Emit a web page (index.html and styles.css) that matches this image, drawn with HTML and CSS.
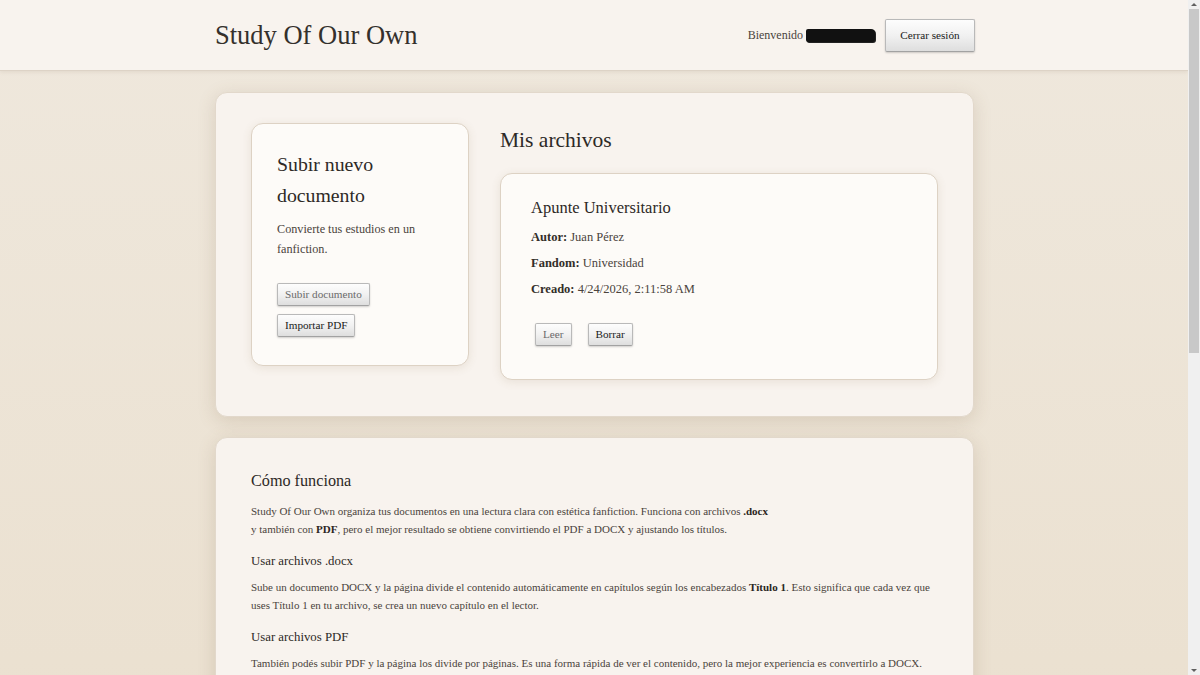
FILE: index.html
```html
<!DOCTYPE html>
<html lang="es">
<head>
<meta charset="utf-8">
<title>Study Of Our Own</title>
<link rel="stylesheet" href="styles.css">
</head>
<body>
<div class="viewport">
<header class="topbar">
  <div class="topbar-inner">
    <h1 class="brand">Study Of Our Own</h1>
    <div class="user">
      <span class="welcome">Bienvenido</span>
      <span class="redacted"></span>
      <button class="btn btn-logout">Cerrar sesión</button>
    </div>
  </div>
</header>
<main class="page">
  <section class="panel panel-files">
    <div class="upload-card">
      <h2 class="upload-title">Subir nuevo documento</h2>
      <p class="upload-text">Convierte tus estudios en un fanfiction.</p>
      <div class="upload-actions">
        <button class="btn btn-sm btn-muted">Subir documento</button>
        <button class="btn btn-sm">Importar PDF</button>
      </div>
    </div>
    <div class="files">
      <h2 class="files-title">Mis archivos</h2>
      <article class="file-card">
        <h3 class="file-title">Apunte Universitario</h3>
        <p class="file-meta"><strong>Autor:</strong> Juan Pérez</p>
        <p class="file-meta"><strong>Fandom:</strong> Universidad</p>
        <p class="file-meta"><strong>Creado:</strong> 4/24/2026, 2:11:58 AM</p>
        <div class="file-actions">
          <button class="btn btn-sm btn-muted">Leer</button>
          <button class="btn btn-sm">Borrar</button>
        </div>
      </article>
    </div>
  </section>
  <section class="panel panel-help">
    <h3 class="help-title">Cómo funciona</h3>
    <p class="help-text">Study Of Our Own organiza tus documentos en una lectura clara con estética fanfiction. Funciona con archivos <strong>.docx</strong><br>y también con <strong>PDF</strong>, pero el mejor resultado se obtiene convirtiendo el PDF a DOCX y ajustando los títulos.</p>
    <h4 class="help-sub">Usar archivos .docx</h4>
    <p class="help-text">Sube un documento DOCX y la página divide el contenido automáticamente en capítulos según los encabezados <strong>Título 1</strong>. Esto significa que cada vez que uses Título 1 en tu archivo, se crea un nuevo capítulo en el lector.</p>
    <h4 class="help-sub">Usar archivos PDF</h4>
    <p class="help-text">También podés subir PDF y la página los divide por páginas. Es una forma rápida de ver el contenido, pero la mejor experiencia es convertirlo a DOCX.<br>Para convertirlo podés usar Word o Google Docs y después aplicar Título 1 a cada capítulo.</p>
    <h4 class="help-sub">Consejos</h4>
    <p class="help-text">Revisá que cada capítulo tenga su propio encabezado y que el documento no tenga saltos de página innecesarios.</p>
  </section>
</main>
</div>
<div class="scrollbar" aria-hidden="true">
  <span class="scroll-arrow scroll-up"></span>
  <span class="scroll-thumb"></span>
  <span class="scroll-arrow scroll-down"></span>
</div>
</body>
</html>
```

FILE: styles.css
```css
* { box-sizing: border-box; }

html, body {
  margin: 0;
  padding: 0;
}

body {
  font-family: "Liberation Serif", "Times New Roman", serif;
  color: #4a433c;
  background: linear-gradient(180deg, #efe8dd 0%, #ebe1d1 60%, #e9dcc8 100%);
  min-height: 1100px;
}

.viewport {
  margin-right: 12px;
}

.topbar {
  height: 71px;
  background: #f8f3ee;
  border-bottom: 1px solid #ddd3c6;
  box-shadow: 0 1px 4px rgba(120, 100, 70, 0.12);
}

.topbar-inner {
  width: 762px;
  height: 70px;
  margin: 0 auto;
  padding-left: 2px;
  display: flex;
  align-items: center;
  justify-content: space-between;
}

.brand {
  margin: 0;
  font-size: 26.5px;
  font-weight: normal;
  color: #34302c;
}

.user {
  display: flex;
  align-items: center;
}

.welcome {
  font-size: 12px;
  color: #4a433c;
}

.redacted {
  display: inline-block;
  width: 69px;
  height: 13px;
  margin-left: 3px;
  margin-right: 10px;
  background: #111;
  border-radius: 2px 4px 3px 2px;
  box-shadow: 1px 1px 0 #222;
}

.btn {
  font-family: "Liberation Serif", "Times New Roman", serif;
  color: #1a1a1a;
  background: linear-gradient(180deg, #fdfdfd 0%, #f1f1f1 50%, #dedede 100%);
  border: 1px solid #b9b9b9;
  border-bottom-color: #a2a2a2;
  border-radius: 2px;
  box-shadow: 0 1px 2px rgba(0, 0, 0, 0.18);
  cursor: pointer;
}

.btn-logout {
  width: 90px;
  height: 33px;
  font-size: 11.2px;
  padding: 0;
}

.btn-sm {
  height: 23px;
  font-size: 11.2px;
  padding: 0 7px;
  line-height: 21px;
}

.btn-muted {
  color: #6a6a6a;
}

.page {
  width: 760px;
  margin: 21px auto 0;
  padding-left: 1px;
  display: flex;
  flex-direction: column;
  gap: 20px;
}

.panel {
  background: #f8f3ee;
  border: 1px solid #e2d8cb;
  border-radius: 12px;
  box-shadow: 0 4px 18px rgba(120, 95, 60, 0.18);
}

.panel-files {
  padding: 30px 35px 36px;
  display: grid;
  grid-template-columns: 218px 438px;
  column-gap: 31px;
  align-items: start;
}

.upload-card {
  background: #fdfbf8;
  border: 1px solid #ddd2c4;
  border-radius: 12px;
  box-shadow: 0 2px 10px rgba(120, 95, 60, 0.12);
  padding: 25px 25px 28px;
}

.upload-title {
  margin: 0;
  font-size: 19.8px;
  line-height: 31px;
  font-weight: normal;
  color: #2d2926;
}

.upload-text {
  margin: 9px 0 0;
  font-size: 12.2px;
  line-height: 19.5px;
}

.upload-actions {
  margin-top: 24px;
  display: flex;
  flex-direction: column;
  align-items: flex-start;
  gap: 8px;
}

.files-title {
  margin: 0;
  font-size: 21.5px;
  line-height: 34px;
  font-weight: normal;
  color: #2d2926;
}

.file-card {
  margin-top: 16px;
  background: #fdfbf8;
  border: 1px solid #ddd2c4;
  border-radius: 12px;
  box-shadow: 0 2px 10px rgba(120, 95, 60, 0.12);
  padding: 21px 30px 33px;
}

.file-title {
  margin: 0;
  font-size: 16.5px;
  line-height: 26px;
  font-weight: normal;
  color: #2d2926;
}

.file-meta {
  margin: 6.5px 0 0;
  font-size: 12.5px;
  line-height: 19.5px;
}

.file-meta strong {
  color: #332e29;
}

.file-actions {
  margin: 24px 0 0 4px;
  display: flex;
  gap: 16px;
}

.panel-help {
  padding: 30px 35px 40px;
}

.help-title {
  margin: 0;
  font-size: 16.2px;
  line-height: 26px;
  font-weight: normal;
  color: #2d2926;
}

.help-sub {
  margin: 13px 0 0;
  font-size: 12.8px;
  line-height: 21px;
  font-weight: normal;
  color: #2d2926;
}

.help-text {
  margin: 9px 0 0;
  font-size: 11px;
  line-height: 17.5px;
}

.help-sub + .help-text {
  margin-top: 7px;
}

.help-text strong {
  color: #2b2622;
}

.scrollbar {
  position: fixed;
  top: 0;
  right: 0;
  width: 12px;
  height: 100vh;
  background: #f0f0f0;
  display: flex;
  flex-direction: column;
  align-items: center;
}

.scroll-arrow {
  width: 0;
  height: 0;
  flex: none;
  border-left: 3px solid transparent;
  border-right: 3px solid transparent;
}

.scroll-up {
  margin-top: 3px;
  border-bottom: 3px solid #606060;
}

.scroll-down {
  margin-top: auto;
  margin-bottom: 3px;
  border-top: 3px solid #606060;
}

.scroll-thumb {
  width: 10px;
  height: 344px;
  margin-top: 3px;
  background: #c8c8c8;
}
```
